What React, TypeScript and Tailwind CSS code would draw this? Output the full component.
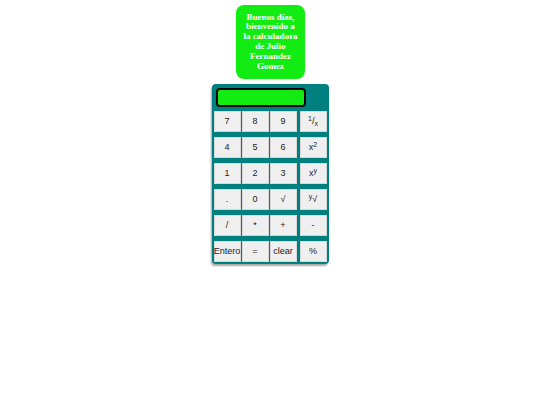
import React from 'react';

const rows: React.ReactNode[][] = [
  ['7', '8', '9', <span key="inv"><sup>1</sup>/<sub>x</sub></span>],
  ['4', '5', '6', <span key="sq">x<sup>2</sup></span>],
  ['1', '2', '3', <span key="pow">x<sup>y</sup></span>],
  ['.', '0', '√', <span key="root"><sup>y</sup>√</span>],
  ['/', '*', '+', '-'],
  ['Entero', '=', 'clear', '%'],
];

function Key({ children, last }: { children: React.ReactNode; last?: boolean }) {
  return (
    <button
      className={`h-[21px] w-[27px] bg-[#efefef] border border-[#d8d8d8] text-[9px] text-[#222] leading-none flex items-center justify-center whitespace-nowrap overflow-visible [&_sup]:text-[7px] [&_sub]:text-[7px] ${
        last ? 'ml-[2px]' : ''
      }`}
    >
      {children}
    </button>
  );
}

export default function App() {
  return (
    <div
      className="w-[540px] h-[405px] bg-white flex flex-col items-center"
      style={{ fontFamily: '"Liberation Sans", Arial, sans-serif' }}
    >
      <div
        className="mt-[5px] ml-[1px] w-[69px] h-[74px] rounded-[8px] bg-[#12ec12] text-white font-bold text-[9px] leading-[9.8px] text-center flex items-center justify-center px-[4px]"
        style={{ fontFamily: '"Liberation Serif", "Times New Roman", serif' }}
      >
        <div>
          Buenos días,<br />bienvenido a<br />la calculadora<br />de Julio<br />Fernandez<br />Gomez
        </div>
      </div>
      <div className="mt-[5px] w-[117px] h-[180px] bg-[#007f7f] rounded-[4px] shadow-[-1px_2px_2px_rgba(0,0,0,0.35)] pt-[4px] pl-[2px]">
        <div className="ml-[2px] w-[90px] h-[19px] bg-[#12ec12] border-2 border-black rounded-[4px]" />
        <div className="mt-[4px] flex flex-col gap-[5px]">
          {rows.map((row, i) => (
            <div key={i} className="flex gap-[1px]">
              {row.map((k, j) => (
                <Key key={j} last={j === 3}>
                  {k}
                </Key>
              ))}
            </div>
          ))}
        </div>
      </div>
    </div>
  );
}
